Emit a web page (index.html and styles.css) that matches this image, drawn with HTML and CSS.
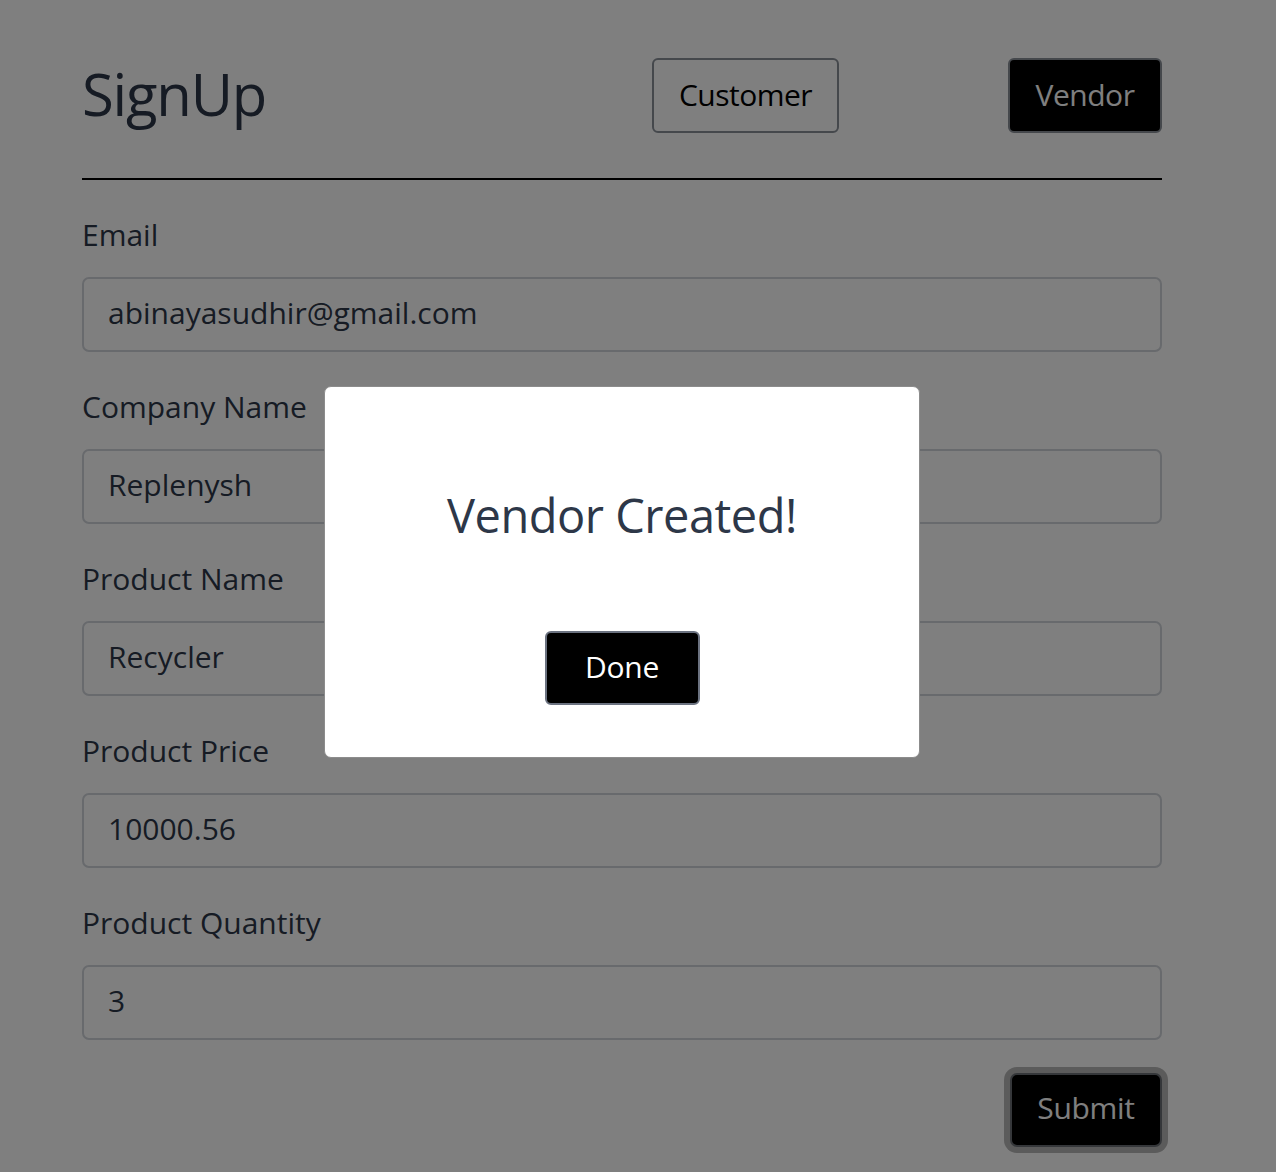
FILE: index.html
```html
<!DOCTYPE html>
<html lang="en">
<head>
<meta charset="utf-8">
<title>SignUp</title>
<link rel="stylesheet" href="styles.css">
</head>
<body>
<div class="page">
  <header class="header">
    <h1 class="title">SignUp</h1>
    <button class="tab tab-outline">Customer</button>
    <button class="tab tab-solid">Vendor</button>
  </header>
  <hr class="divider">
  <form class="form">
    <div class="field">
      <label class="label">Email</label>
      <input class="input" type="text" value="abinayasudhir@gmail.com">
    </div>
    <div class="field">
      <label class="label">Company Name</label>
      <input class="input" type="text" value="Replenysh">
    </div>
    <div class="field">
      <label class="label">Product Name</label>
      <input class="input" type="text" value="Recycler">
    </div>
    <div class="field">
      <label class="label">Product Price</label>
      <input class="input" type="text" value="10000.56">
    </div>
    <div class="field">
      <label class="label">Product Quantity</label>
      <input class="input" type="text" value="3">
    </div>
    <div class="actions">
      <button class="submit" type="button">Submit</button>
    </div>
  </form>
</div>
<div class="overlay">
  <div class="modal">
    <p class="modal-title">Vendor Created!</p>
    <button class="done" type="button">Done</button>
  </div>
</div>
</body>
</html>
```
FILE: styles.css
```css
* { box-sizing: border-box; }
html, body { margin: 0; padding: 0; background: #ffffff; }
body {
  font-family: "Open Sans", "DejaVu Sans", sans-serif;
  color: #2d3748;
  height: 1172px;
  overflow: hidden;
}
.page {
  padding: 58px 114px 0 82px;
}
.header {
  display: flex;
  align-items: center;
  height: 75px;
}
.title {
  flex: 1;
  margin: 0 0 4px;
  font-size: 58px;
  font-weight: 400;
  line-height: 1;
  color: #2d3748;
  letter-spacing: -1.2px;
}
.tab {
  font-family: inherit;
  font-size: 30px;
  height: 75px;
  border-radius: 6px;
  padding: 0 20px 2px;
  letter-spacing: -0.5px;
}
.tab-outline {
  background: #ffffff;
  color: #000000;
  border: 2px solid #8a9099;
  width: 187px;
  margin-right: 169px;
}
.tab-solid {
  background: #000000;
  color: #ffffff;
  border: 2px solid #8a9099;
  width: 154px;
}
.divider {
  margin: 45px 0 0;
  border: 0;
  border-top: 2px solid #000000;
}
.form {
  display: flex;
  flex-direction: column;
  padding-top: 34px;
}
.field {
  display: flex;
  flex-direction: column;
  margin-bottom: 34px;
}
.label {
  font-size: 30px;
  line-height: 36px;
  color: #2d3748;
  margin-top: 3px;
  margin-bottom: 24px;
}
.input {
  height: 75px;
  border: 2px solid #d0d4da;
  border-radius: 7px;
  padding: 0 24px 4px;
  font-family: inherit;
  font-size: 30px;
  color: #2d3748;
  background: #ffffff;
  outline: none;
}
.actions {
  display: flex;
  justify-content: flex-end;
  margin-top: -1px;
}
.submit {
  width: 152px;
  height: 74px;
  padding: 0 0 5px;
  background: #000000;
  color: #ffffff;
  border: 2px solid #6b6f75;
  border-radius: 7px;
  font-family: inherit;
  font-size: 30px;
  letter-spacing: -0.3px;
  box-shadow: 0 0 0 6px #b6b6b6;
}
.overlay {
  position: fixed;
  inset: 0;
  background: rgba(0, 0, 0, 0.5);
}
.modal {
  position: absolute;
  left: 324px;
  top: 386px;
  width: 596px;
  height: 372px;
  background: #ffffff;
  border: 1px solid #8c8c8c;
  border-radius: 7px;
  display: flex;
  flex-direction: column;
  align-items: center;
  padding-top: 98px;
}
.modal-title {
  margin: 0;
  font-size: 47px;
  line-height: 60px;
  color: #2d3748;
  letter-spacing: -0.5px;
}
.done {
  margin-top: 86px;
  width: 155px;
  height: 74px;
  padding: 0 0 4px;
  background: #000000;
  color: #ffffff;
  border: 2px solid #6b7280;
  border-radius: 6px;
  font-family: inherit;
  font-size: 30px;
  letter-spacing: -0.3px;
}
```
